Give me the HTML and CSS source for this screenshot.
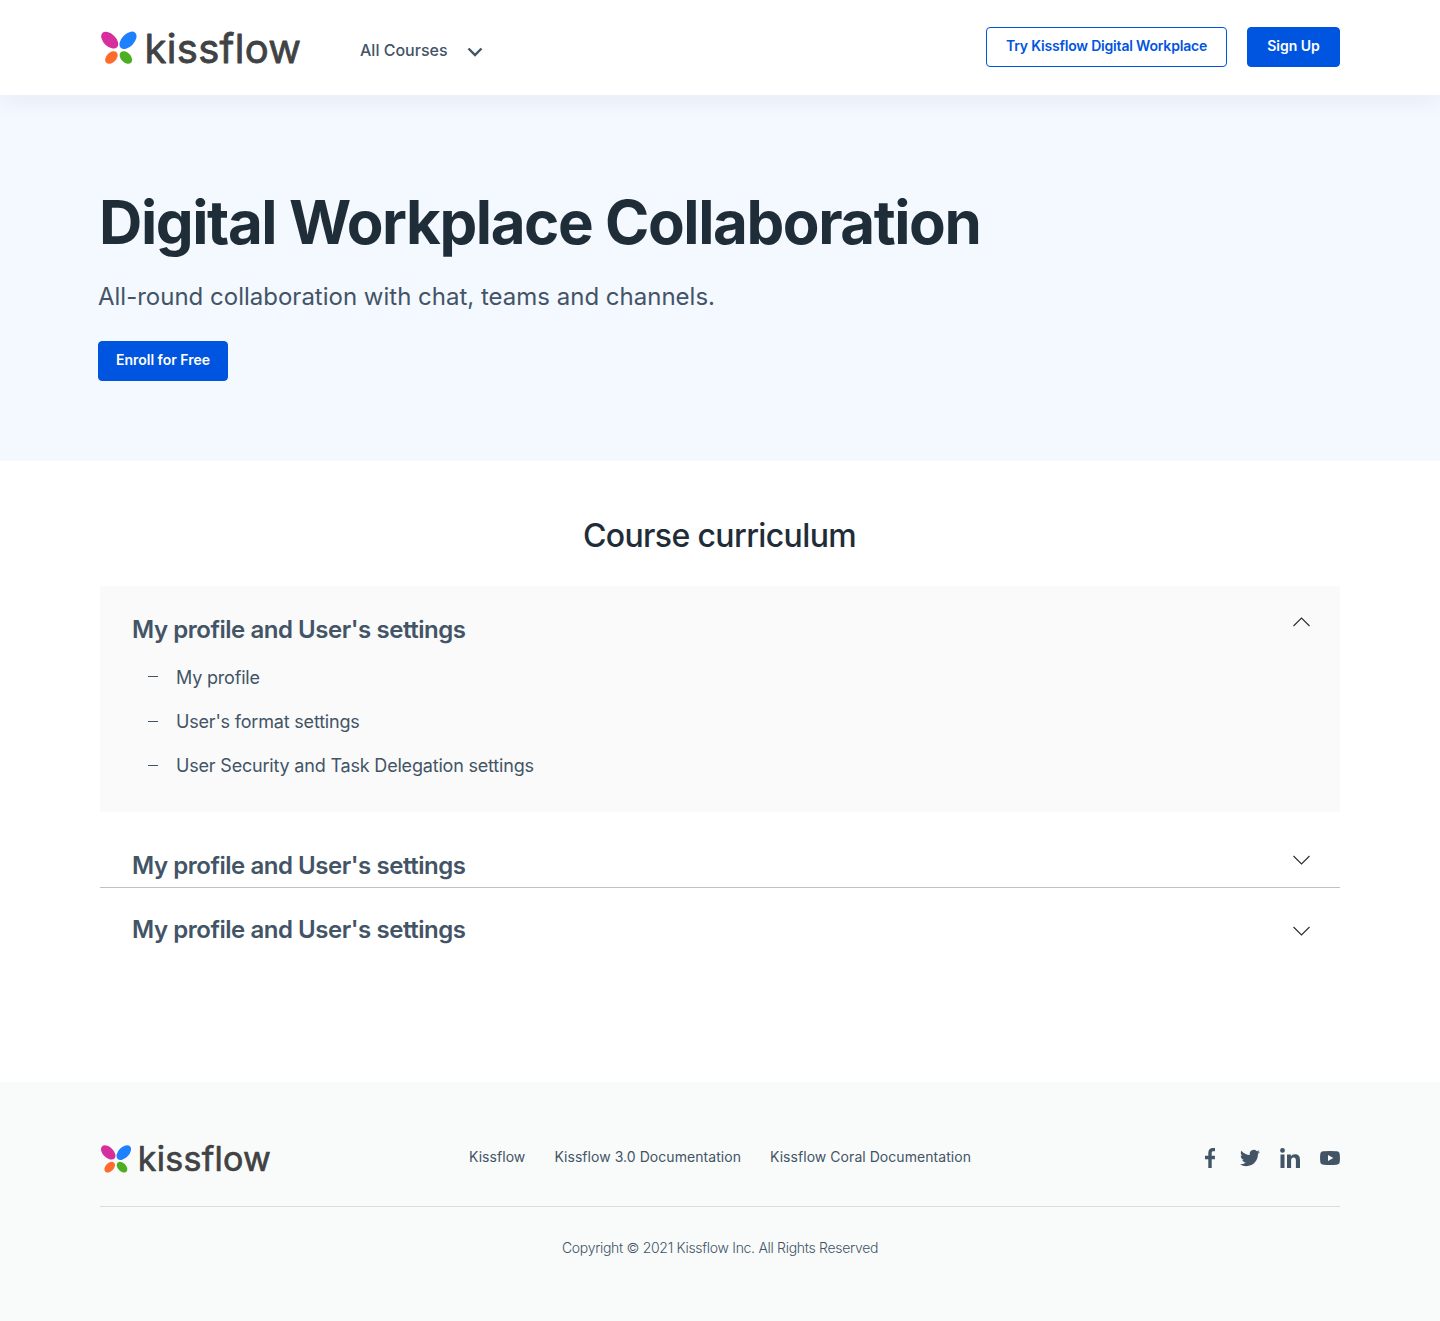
FILE: index.html
```html
<!DOCTYPE html>
<html lang="en">
<head>
<meta charset="utf-8">
<title>Digital Workplace Collaboration | Kissflow</title>
<link rel="stylesheet" href="styles.css">
</head>
<body>
<svg width="0" height="0" class="sprite" aria-hidden="true">
  <symbol id="petals" viewBox="0 0 40 34">
    <ellipse cx="9.700" cy="9.200" rx="10.200" ry="6.200" transform="rotate(44 9.700 9.200)" fill="#d62e9c"/>
    <ellipse cx="28" cy="9.300" rx="10.400" ry="6.300" transform="rotate(-46 28 9.300)" fill="#1f80ff"/>
    <ellipse cx="11.400" cy="26.500" rx="7.400" ry="4.900" transform="rotate(-46 11.400 26.500)" fill="#ff6b2c"/>
    <ellipse cx="25.900" cy="26.500" rx="7.400" ry="4.900" transform="rotate(46 25.900 26.500)" fill="#4caf22"/>
  </symbol>
  <symbol id="chevron" viewBox="0 0 18 10">
    <path d="M1.500 1l8 8 8-8" fill="none" stroke="#2b2b2b" stroke-width="1.100"/>
  </symbol>
</svg>

<header class="header">
  <svg class="logo" width="202" height="52" viewBox="0 -9 202 52">
    <use href="#petals" width="40" height="34"/>
    <text x="44.500" y="31.500" textLength="156.500" lengthAdjust="spacing" class="logo-word">kissflow</text>
  </svg>
  <a class="courses">
    <span>All Courses</span>
    <svg width="16" height="10" viewBox="0 0 16 10"><path d="M1.500 1.500 8 8l6.500-6.500" fill="none" stroke="#425466" stroke-width="2.400"/></svg>
  </a>
  <div class="actions">
    <a class="btn btn-outline">Try Kissflow Digital Workplace</a>
    <a class="btn btn-signup">Sign Up</a>
  </div>
</header>

<section class="hero">
  <h1>Digital Workplace Collaboration</h1>
  <p>All-round collaboration with chat, teams and channels.</p>
  <a class="btn btn-enroll">Enroll for Free</a>
</section>

<main class="curriculum">
  <h2>Course curriculum</h2>
  <section class="module module-open">
    <div class="module-head">
      <h3>My profile and User's settings</h3>
      <svg class="chevron up" width="18" height="10"><use href="#chevron"/></svg>
    </div>
    <ul>
      <li>My profile</li>
      <li>User's format settings</li>
      <li>User Security and Task Delegation settings</li>
    </ul>
  </section>
  <section class="module module-ruled">
    <h3>My profile and User's settings</h3>
    <svg class="chevron" width="18" height="10"><use href="#chevron"/></svg>
  </section>
  <section class="module module-last">
    <h3>My profile and User's settings</h3>
    <svg class="chevron" width="18" height="10"><use href="#chevron"/></svg>
  </section>
</main>

<footer class="footer">
  <div class="footer-top">
    <svg width="172" height="44" viewBox="0 -9 202.350 51.765">
      <use href="#petals" width="40" height="34"/>
      <text x="44.500" y="31.500" textLength="156.500" lengthAdjust="spacing" class="logo-word">kissflow</text>
    </svg>
    <nav class="links">
      <a>Kissflow</a>
      <a>Kissflow 3.0 Documentation</a>
      <a>Kissflow Coral Documentation</a>
    </nav>
    <div class="social">
      <svg width="20" height="20" viewBox="0 0 20 20"><path d="M8.300 20v-8.700H5V7.800h3.300V4.900C8.300 1.700 10.100 0 12.800 0H15v3.200h-1.600c-1.300 0-1.700.7-1.700 1.700v2.900h3.200v3.500h-3.200V20z"/></svg>
      <svg width="20" height="20" viewBox="0 0 24 24"><path d="M23.953 4.570a10 10 0 01-2.825.775 4.958 4.958 0 002.163-2.723c-.951.555-2.005.959-3.127 1.184a4.920 4.920 0 00-8.384 4.482C7.690 8.095 4.067 6.130 1.640 3.162a4.822 4.822 0 00-.666 2.475c0 1.710.870 3.213 2.188 4.096a4.904 4.904 0 01-2.228-.616v.060a4.923 4.923 0 003.946 4.827 4.996 4.996 0 01-2.212.085 4.936 4.936 0 004.604 3.417 9.867 9.867 0 01-6.102 2.105c-.39 0-.779-.023-1.170-.067a13.995 13.995 0 007.557 2.209c9.053 0 13.998-7.496 13.998-13.985 0-.21 0-.42-.015-.63A9.935 9.935 0 0024 4.590z"/></svg>
      <svg width="20" height="20" viewBox="0 0 20 20"><circle cx="2.500" cy="2.400" r="2.400"/><path d="M.5 6.500h4V20h-4zM7 6.500h3.900v1.900c.8-1.300 2.200-2.200 4.100-2.200 4 0 5 2.500 5 6.100V20h-4.100v-6.900c0-1.900-.3-3.500-2.300-3.500-1.900 0-2.500 1.500-2.500 3.500V20H7z"/></svg>
      <svg width="20" height="20" viewBox="0 0 20 20"><path fill-rule="evenodd" d="M3.500 3.300Q10 2.700 16.500 3.300C19 3.500 19.700 4.700 19.800 7q.3 3 0 6c-.1 2.300-.8 3.500-3.300 3.700q-6.500.6-13 0C1 16.500.3 15.300.2 13q-.3-3 0-6C.3 4.700 1 3.500 3.500 3.300zM8 6.900v6.200l5.300-3.100z"/></svg>
    </div>
  </div>
  <p class="copyright">Copyright © 2021 Kissflow Inc. All Rights Reserved</p>
</footer>
</body>
</html>
```
FILE: styles.css
```css
* { box-sizing: border-box; }

body {
  margin: 0;
  font-family: Inter, "Liberation Sans", sans-serif;
  color: #425466;
  background: #fff;
}

h1, h2, h3, p, ul { margin: 0; padding: 0; }
h1, h2 { color: #1f2d38; }

.sprite { position: absolute; }

.logo-word {
  font: 400 40px Inter, sans-serif;
  fill: #414244;
  stroke: #414244;
  stroke-width: 0.8;
  stroke-linejoin: round;
}

.header {
  position: relative;
  z-index: 1;
  display: flex;
  align-items: flex-start;
  height: 95px;
  padding: 0 100px;
  background: #fff;
  box-shadow: 0 4px 24px rgba(30, 50, 100, 0.07);
}

.logo { margin-top: 22px; }

.courses {
  display: flex;
  align-items: center;
  gap: 19px;
  margin: 40px 0 0 58px;
  font-size: 16px;
  font-weight: 500;
  line-height: 20px;
}

.courses svg { margin-top: 4px; }

.actions {
  display: flex;
  gap: 20px;
  margin: 27px 0 0 auto;
}

.btn {
  display: flex;
  justify-content: center;
  height: 40px;
  border: 1px solid #0055e0;
  border-radius: 4px;
  background: #0055e0;
  color: #fff;
  font-size: 14px;
  font-weight: 600;
  line-height: 36px;
  white-space: nowrap;
}

.btn-outline {
  width: 241px;
  background: #fff;
  color: #0055e0;
  letter-spacing: -0.19px;
}

.btn-signup { width: 93px; }

.hero {
  height: 366px;
  padding: 91px 98px 0;
  background: #f4f8ff;
}

.hero h1 {
  padding-left: 1px;
  font-size: 60px;
  font-weight: 700;
  line-height: 72px;
  letter-spacing: -1.43px;
}

.hero p {
  margin: 24px 0 29px;
  font-size: 24px;
  font-weight: 400;
  line-height: 30px;
}

.btn-enroll { width: 130px; }

.curriculum {
  height: 621px;
  padding: 55px 100px 0;
}

.curriculum h2 {
  margin-bottom: 30px;
  padding-right: 1px;
  font-size: 32px;
  font-weight: 500;
  line-height: 40px;
  letter-spacing: -0.62px;
  text-align: center;
}

.curriculum h3 {
  font-size: 24px;
  font-weight: 600;
  line-height: 32px;
  letter-spacing: -0.45px;
}

.chevron.up { transform: scaleY(-1); }

.module-open {
  height: 226px;
  padding: 28px 30px 0 32px;
  background: #fafafa;
}

.module-head,
.module-ruled,
.module-last {
  display: flex;
  justify-content: space-between;
}

.module-head .chevron { margin-top: 3px; }

.module-open ul {
  padding: 10px 0 0 16px;
  list-style: none;
}

.module-open li {
  display: flex;
  align-items: center;
  gap: 18px;
  font-size: 18px;
  line-height: 44px;
  letter-spacing: -0.19px;
}

.module-open li::before {
  content: "";
  width: 10px;
  height: 1px;
  margin-top: -2px;
  background: #425466;
}

.module-open li:first-child::before { margin-top: -4px; }

.module-ruled {
  height: 76px;
  padding: 38px 30px 0 32px;
  border-bottom: 1px solid #c0c1c3;
}

.module-ruled .chevron { margin-top: 5px; }

.module-last { padding: 26px 30px 0 32px; }
.module-last .chevron { margin-top: 12px; }

.footer {
  height: 239px;
  padding: 0 100px;
  background: #f9fbfa;
}

.footer-top {
  display: flex;
  height: 125px;
  padding-top: 55px;
  border-bottom: 1px solid #d8dcdb;
}

.links {
  display: flex;
  gap: 29px;
  margin: 10px 0 0 197px;
  font-size: 14px;
  line-height: 20px;
  letter-spacing: 0.05px;
}

.social {
  display: flex;
  gap: 20px;
  margin: 11px 0 0 auto;
  fill: #425466;
}

.copyright {
  padding-top: 31px;
  font-size: 14px;
  font-weight: 300;
  line-height: 20px;
  letter-spacing: -0.3px;
  text-align: center;
}
```
